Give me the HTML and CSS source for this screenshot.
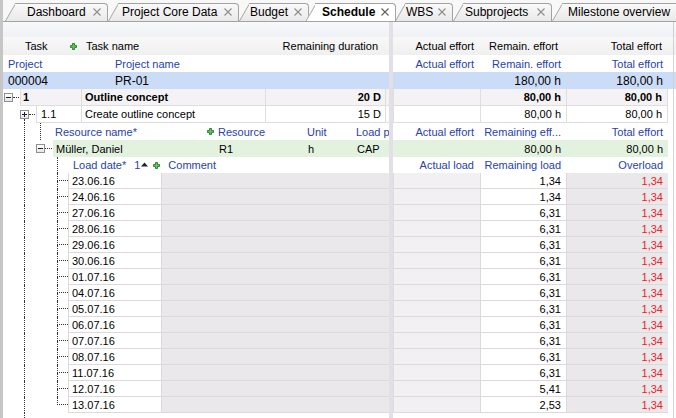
FILE: index.html
```html
<html>
<head>
    <title>Schedule</title>
    <link rel="stylesheet" href="styles.css">
</head>
<body>
<div class="app">
    <div class="tabs">
        <div class="tab t1"><span>Dashboard</span><svg class="x" width="8" height="8" viewBox="0 0 8 8"><path d="M0.5 0.5L7.5 7.5M7.5 0.5L0.5 7.5"/></svg></div>
        <div class="tab t2"><span>Project Core Data</span><svg class="x" width="8" height="8" viewBox="0 0 8 8"><path d="M0.5 0.5L7.5 7.5M7.5 0.5L0.5 7.5"/></svg></div>
        <div class="tab t3"><span>Budget</span><svg class="x" width="8" height="8" viewBox="0 0 8 8"><path d="M0.5 0.5L7.5 7.5M7.5 0.5L0.5 7.5"/></svg></div>
        <div class="tab t4 on"><span>Schedule</span><svg class="x" width="8" height="8" viewBox="0 0 8 8"><path d="M0.5 0.5L7.5 7.5M7.5 0.5L0.5 7.5"/></svg></div>
        <div class="tab t5"><span>WBS</span><svg class="x" width="8" height="8" viewBox="0 0 8 8"><path d="M0.5 0.5L7.5 7.5M7.5 0.5L0.5 7.5"/></svg></div>
        <div class="tab t6"><span>Subprojects</span><svg class="x" width="8" height="8" viewBox="0 0 8 8"><path d="M0.5 0.5L7.5 7.5M7.5 0.5L0.5 7.5"/></svg></div>
        <div class="tab t7"><span>Milestone overview</span></div>
    </div>

    <div class="grid">
        <!-- empty band above the headers -->
        <div class="row strip">
            <div class="lp"></div><div class="split"></div><div class="rp"></div><div class="tail"></div>
        </div>

        <!-- column headers -->
        <div class="row head">
            <div class="lp">
                <div class="c c-task">Task<svg class="plus" width="7" height="7" viewBox="0 0 7 7"><path d="M2.5 0.5h2v2h2v2h-2v2h-2v-2h-2v-2h2z"/></svg></div>
                <div class="c c-name">Task name</div>
                <div class="c c-dur num">Remaining duration</div>
            </div>
            <div class="split"></div>
            <div class="rp">
                <div class="c r1 num">Actual effort</div>
                <div class="c r2 num pr8">Remain. effort</div>
                <div class="c r3 num">Total effort</div>
            </div>
            <div class="tail"></div>
        </div>

        <!-- project -->
        <div class="row">
            <div class="lp hd">
                <div class="c c-proj">Project</div>
                <div class="c c-pname">Project name</div>
            </div>
            <div class="split"></div>
            <div class="rp hd">
                <div class="c r1 num">Actual effort</div>
                <div class="c r2 num">Remain. effort</div>
                <div class="c r3 num">Total effort</div>
            </div>
            <div class="tail"></div>
        </div>
        <div class="row proj">
            <div class="lp">
                <div class="c c-proj">000004</div>
                <div class="c c-pname pl3">PR-01</div>
            </div>
            <div class="split"></div>
            <div class="rp">
                <div class="c r1 num"></div>
                <div class="c r2 num">180,00 h</div>
                <div class="c r3 num">180,00 h</div>
            </div>
            <div class="tail"></div>
        </div>

        <!-- tasks -->
        <div class="row task sum">
            <div class="lp">
                <div class="tree"><span class="box minus"></span><span class="hl"></span></div>
                <div class="c cell c-id">1</div>
                <div class="c cell c-name">Outline concept</div>
                <div class="c cell c-dur num">20 D</div>
                <div class="c cell c-end"></div>
            </div>
            <div class="split"></div>
            <div class="rp">
                <div class="c cell r1 num"></div>
                <div class="c cell r2 num">80,00 h</div>
                <div class="c cell r3 num">80,00 h</div>
            </div>
            <div class="tail"></div>
        </div>
        <div class="row task">
            <div class="lp">
                <div class="tree"></div>
                <div class="tw"><span class="box plusbox down"></span><span class="hl"></span></div>
                <div class="c cell c-id2">1.1</div>
                <div class="c cell c-name">Create outline concept</div>
                <div class="c cell c-dur num">15 D</div>
                <div class="c cell c-end"></div>
            </div>
            <div class="split"></div>
            <div class="rp">
                <div class="c cell r1 num"></div>
                <div class="c cell r2 num">80,00 h</div>
                <div class="c cell r3 num">80,00 h</div>
            </div>
            <div class="tail"></div>
        </div>

        <!-- resources -->
        <div class="row">
            <div class="lp hd">
                <span class="g21"></span><span class="vl w16"></span><span class="vl w12"></span>
                <div class="c c-rn pl6">Resource name*<svg class="plus" width="7" height="7" viewBox="0 0 7 7"><path d="M2.5 0.5h2v2h2v2h-2v2h-2v-2h-2v-2h2z"/></svg></div>
                <div class="c c-res pl5">Resource</div>
                <div class="c c-unit pl6">Unit</div>
                <div class="c c-load pl7">Load planning</div>
            </div>
            <div class="split"></div>
            <div class="rp hd">
                <div class="c r1 num">Actual effort</div>
                <div class="c r2 num">Remaining eff...</div>
                <div class="c r3 num">Total effort</div>
            </div>
            <div class="tail"></div>
        </div>
        <div class="row res">
            <div class="lp">
                <span class="g21"></span><span class="vl w12"></span>
                <span class="mid"><span class="box minus"></span></span><span class="hl w7"></span>
                <div class="c c-rn green">Müller, Daniel</div>
                <div class="c c-res green">R1</div>
                <div class="c c-unit green">h</div>
                <div class="c c-load green">CAP</div>
            </div>
            <div class="split"></div>
            <div class="rp green">
                <div class="c r1 num"></div>
                <div class="c r2 num">80,00 h</div>
                <div class="c r3 num">80,00 h</div>
            </div>
            <div class="tail"></div>
        </div>

        <!-- load dates -->
        <div class="row h16">
            <div class="lp hd">
                <span class="g21"></span><span class="vl w33"></span><span class="vl w13"></span>
                <div class="c c-ld">Load date*<span class="sort">1</span><svg class="tri" width="7" height="5" viewBox="0 0 7 5"><path d="M0 4.5L3.5 0.5L7 4.5Z"/></svg><svg class="plus" width="7" height="7" viewBox="0 0 7 7"><path d="M2.5 0.5h2v2h2v2h-2v2h-2v-2h-2v-2h2z"/></svg><span class="cmt">Comment</span></div>
            </div>
            <div class="split"></div>
            <div class="rp hd">
                <div class="c r1 num">Actual load</div>
                <div class="c r2 num">Remaining load</div>
                <div class="c r3 num">Overload</div>
            </div>
            <div class="tail"></div>
        </div>

        <div class="row day"><div class="lp"><span class="g21"></span><span class="vl w33"></span><span class="hook"><i></i><i></i></span><div class="c date">23.06.16</div><div class="c rest"></div></div><div class="split"></div><div class="rp"><div class="c r1"></div><div class="c r2 num">1,34</div><div class="c r3 num over">1,34</div></div><div class="tail"></div></div>
        <div class="row day"><div class="lp"><span class="g21"></span><span class="vl w33"></span><span class="hook"><i></i><i></i></span><div class="c date">24.06.16</div><div class="c rest"></div></div><div class="split"></div><div class="rp"><div class="c r1"></div><div class="c r2 num">1,34</div><div class="c r3 num over">1,34</div></div><div class="tail"></div></div>
        <div class="row day"><div class="lp"><span class="g21"></span><span class="vl w33"></span><span class="hook"><i></i><i></i></span><div class="c date">27.06.16</div><div class="c rest"></div></div><div class="split"></div><div class="rp"><div class="c r1"></div><div class="c r2 num">6,31</div><div class="c r3 num over">1,34</div></div><div class="tail"></div></div>
        <div class="row day"><div class="lp"><span class="g21"></span><span class="vl w33"></span><span class="hook"><i></i><i></i></span><div class="c date">28.06.16</div><div class="c rest"></div></div><div class="split"></div><div class="rp"><div class="c r1"></div><div class="c r2 num">6,31</div><div class="c r3 num over">1,34</div></div><div class="tail"></div></div>
        <div class="row day"><div class="lp"><span class="g21"></span><span class="vl w33"></span><span class="hook"><i></i><i></i></span><div class="c date">29.06.16</div><div class="c rest"></div></div><div class="split"></div><div class="rp"><div class="c r1"></div><div class="c r2 num">6,31</div><div class="c r3 num over">1,34</div></div><div class="tail"></div></div>
        <div class="row day"><div class="lp"><span class="g21"></span><span class="vl w33"></span><span class="hook"><i></i><i></i></span><div class="c date">30.06.16</div><div class="c rest"></div></div><div class="split"></div><div class="rp"><div class="c r1"></div><div class="c r2 num">6,31</div><div class="c r3 num over">1,34</div></div><div class="tail"></div></div>
        <div class="row day"><div class="lp"><span class="g21"></span><span class="vl w33"></span><span class="hook"><i></i><i></i></span><div class="c date">01.07.16</div><div class="c rest"></div></div><div class="split"></div><div class="rp"><div class="c r1"></div><div class="c r2 num">6,31</div><div class="c r3 num over">1,34</div></div><div class="tail"></div></div>
        <div class="row day"><div class="lp"><span class="g21"></span><span class="vl w33"></span><span class="hook"><i></i><i></i></span><div class="c date">04.07.16</div><div class="c rest"></div></div><div class="split"></div><div class="rp"><div class="c r1"></div><div class="c r2 num">6,31</div><div class="c r3 num over">1,34</div></div><div class="tail"></div></div>
        <div class="row day"><div class="lp"><span class="g21"></span><span class="vl w33"></span><span class="hook"><i></i><i></i></span><div class="c date">05.07.16</div><div class="c rest"></div></div><div class="split"></div><div class="rp"><div class="c r1"></div><div class="c r2 num">6,31</div><div class="c r3 num over">1,34</div></div><div class="tail"></div></div>
        <div class="row day"><div class="lp"><span class="g21"></span><span class="vl w33"></span><span class="hook"><i></i><i></i></span><div class="c date">06.07.16</div><div class="c rest"></div></div><div class="split"></div><div class="rp"><div class="c r1"></div><div class="c r2 num">6,31</div><div class="c r3 num over">1,34</div></div><div class="tail"></div></div>
        <div class="row day"><div class="lp"><span class="g21"></span><span class="vl w33"></span><span class="hook"><i></i><i></i></span><div class="c date">07.07.16</div><div class="c rest"></div></div><div class="split"></div><div class="rp"><div class="c r1"></div><div class="c r2 num">6,31</div><div class="c r3 num over">1,34</div></div><div class="tail"></div></div>
        <div class="row day"><div class="lp"><span class="g21"></span><span class="vl w33"></span><span class="hook"><i></i><i></i></span><div class="c date">08.07.16</div><div class="c rest"></div></div><div class="split"></div><div class="rp"><div class="c r1"></div><div class="c r2 num">6,31</div><div class="c r3 num over">1,34</div></div><div class="tail"></div></div>
        <div class="row day"><div class="lp"><span class="g21"></span><span class="vl w33"></span><span class="hook"><i></i><i></i></span><div class="c date">11.07.16</div><div class="c rest"></div></div><div class="split"></div><div class="rp"><div class="c r1"></div><div class="c r2 num">6,31</div><div class="c r3 num over">1,34</div></div><div class="tail"></div></div>
        <div class="row day"><div class="lp"><span class="g21"></span><span class="vl w33"></span><span class="hook"><i></i><i></i></span><div class="c date">12.07.16</div><div class="c rest"></div></div><div class="split"></div><div class="rp"><div class="c r1"></div><div class="c r2 num">5,41</div><div class="c r3 num over">1,34</div></div><div class="tail"></div></div>
        <div class="row day"><div class="lp"><span class="g21"></span><span class="vl w33"></span><span class="hook end"><i></i><i></i></span><div class="c date">13.07.16</div><div class="c rest"></div></div><div class="split"></div><div class="rp"><div class="c r1"></div><div class="c r2 num">2,53</div><div class="c r3 num over">1,34</div></div><div class="tail"></div></div>

        <div class="row fill">
            <div class="lp"><span class="g21"></span><span class="vl grow"></span></div>
            <div class="split"></div><div class="rp"></div><div class="tail"></div>
        </div>
    </div>
</div>
</body>
</html>
```

FILE: styles.css
```css
* { box-sizing: border-box; }
body {
    margin: 0;
    width: 676px;
    height: 418px;
    overflow: hidden;
    background: #fff;
    color: #000;
    font: 11px "Liberation Sans", Arial, sans-serif;
}
.app {
    height: 418px;
    display: flex;
    flex-direction: column;
    border-left: 3px solid #c6c6c6;
}

/* tab strip */
.tabs {
    flex: none;
    height: 22px;
    display: flex;
    align-items: flex-end;
    padding-left: 2px;
    background: #f8f8f8;
    border-bottom: 1px solid #a3a3a3;
    overflow: hidden;
}
.tab {
    --tab-bg: linear-gradient(#f9f9f9, #e9e9e9);
    position: relative;
    z-index: 0;
    flex: none;
    height: 18px;
    display: flex;
    align-items: center;
    padding-right: 7px;
    font-size: 12px;
    white-space: nowrap;
}
.tab::before {
    content: "";
    position: absolute;
    z-index: -1;
    left: 0; top: 0; bottom: 0;
    width: 16px;
    background: var(--tab-bg);
    border-left: 1px solid #a3a3a3;
    border-top: 1px solid #a3a3a3;
    transform: skewX(-30deg);
    transform-origin: 0 100%;
}
.tab::after {
    content: "";
    position: absolute;
    z-index: -1;
    left: 10px; top: 0; bottom: 0; right: 0;
    background: var(--tab-bg);
    border-top: 1px solid #a3a3a3;
    border-right: 1px solid #a3a3a3;
    border-top-right-radius: 4px;
}
.tab .x { margin-left: auto; stroke: #8e8e8e; stroke-width: 1.1; }
.tab.on {
    --tab-bg: #fff;
    z-index: 1;
    height: 19px;
    margin-bottom: -1px;
    padding-bottom: 1px;
    font-weight: bold;
}
.tab.on .x { stroke: #606060; }
.t1 { width: 103px; padding-left: 22px; }
.t2 { width: 131px; padding-left: 14px; }
.t3 { width: 70px; padding-left: 11px; }
.t4 { width: 91px; padding-left: 17px; margin-left: -4px; }
.t5 { width: 58px; padding-left: 11px; margin-left: -1px; }
.t6 { width: 99px; padding-left: 12px; }
.t7 { width: 140px; padding-left: 16px; }

/* grid */
.grid { flex: 1; display: flex; flex-direction: column; overflow: hidden; }
.row { flex: none; display: flex; height: 17px; }
.row.h16, .row.day { height: 16px; }
.row.fill { flex: 1; }
.lp { width: 386px; flex: none; display: flex; overflow: hidden; }
.split { width: 4px; flex: none; background: #e2dfe6; }
.rp { width: 275px; flex: none; display: flex; }
.tail { flex: 1; margin-right: 2px; border-right: 1px solid #d2d2d2; }

.c {
    flex: none;
    display: flex;
    align-items: center;
    white-space: nowrap;
    overflow: hidden;
}
.num { justify-content: flex-end; padding-right: 5px; }
.hd { color: #2842a6; }
.pl3 { padding-left: 3px; }
.pl5 { padding-left: 5px; }
.pl6 { padding-left: 6px; }
.pl7 { padding-left: 7px; }
.pr8 { padding-right: 8px; }

.r1 { width: 87px; padding-right: 6px; }
.r2 { width: 86px; }
.r3 { width: 102px; }

.strip { height: 15px; background: linear-gradient(#f8f9fb, #eff1f5); }
.head { height: 18px; background: linear-gradient(#f8f8f8, #efefef); }
.head .c-dur { padding-right: 7px; }
.head .r3 { padding-right: 6px; }

.plus { flex: none; fill: #63c263; stroke: #2f8a2f; stroke-width: 1; }
.c-task { width: 78px; padding-left: 22px; }
.c-task .plus { margin-left: auto; margin-right: 4px; }
.c-name { width: 184px; padding-left: 3px; }
.head .c-name { padding-left: 5px; }
.c-dur { width: 120px; padding-right: 4px; }
.c-end { width: 4px; }

.c-proj { width: 107px; padding-left: 5px; }
.c-pname { flex: 1; padding-left: 5px; }
.proj { background: #cbdcf7; font-size: 12px; }

/* tree */
.tree { width: 17px; flex: none; display: flex; align-items: center; }
.tree .box { margin-left: 1px; }
.tw { width: 16px; flex: none; display: flex; align-items: center; }
.hl { flex: 1; height: 0; border-top: 1px dotted #333; margin-right: 1px; }
.hl.w7 { flex: none; width: 7px; align-self: center; }
.mid { display: flex; align-items: center; }
.box {
    position: relative;
    flex: none;
    width: 9px;
    height: 9px;
    border: 1px solid #8f8f8f;
    background: linear-gradient(#fff, #e6e6e6);
}
.box::before {
    content: "";
    position: absolute;
    left: 1px; top: 3px;
    width: 5px; height: 1px;
    background: #1c1c3c;
}
.box.plusbox::after {
    content: "";
    position: absolute;
    left: 3px; top: 1px;
    width: 1px; height: 5px;
    background: #1c1c3c;
}
.box.down { overflow: visible; }
.tw .box.down { box-shadow: none; }
.tw { position: relative; }
.tw::after {
    content: "";
    position: absolute;
    left: 4px; top: 13px;
    height: 4px;
    border-left: 1px dotted #333;
}
.g21 { width: 21px; flex: none; }
.vl { flex: none; border-left: 1px dotted #333; }
.vl.grow { flex: 1; }
.w12 { width: 12px; }
.w13 { width: 13px; }
.w16 { width: 16px; }
.w33 { width: 33px; }

.task .cell {
    border-left: 1px solid #dedede;
    border-bottom: 1px solid #dedede;
}
.sum { font-weight: bold; }
.sum .cell { background: #f4f2f4; }
.task .r3 { border-right: 1px solid #dedede; }
.c-id { width: 61px; padding-left: 2px; }
.c-id2 { width: 45px; padding-left: 4px; }

.c-rn { width: 163px; padding-left: 3px; }
.c-rn .plus { margin-left: auto; margin-right: 1px; }
.c-res { width: 89px; padding-left: 3px; }
.c-unit { width: 49px; padding-left: 3px; }
.c-load { width: 36px; padding-left: 3px; }
.green { background: #e3f2df; }

.c-ld { flex: 1; padding-left: 3px; }
.sort { margin-left: 8px; }
.tri { margin-left: 1px; margin-top: -2px; fill: #222; }
.c-ld .plus { margin-left: 5px; }
.cmt { margin-left: 8px; }

/* load dates */
.hook { width: 11px; flex: none; display: flex; flex-direction: column; }
.hook i { flex: 1; border-left: 1px dotted #333; }
.hook i:first-child { flex: none; height: 8px; border-bottom: 1px dotted #333; }
.hook.end i:last-child { border-left: 0; }
.day .date {
    width: 93px;
    padding-left: 3px;
    border-left: 1px solid #dcd8dc;
    border-bottom: 1px solid #dcd8dc;
}
.day .rest {
    flex: 1;
    background: #ebe8eb;
    border-left: 1px solid #dcd8dc;
    border-bottom: 1px solid #dcd8dc;
}
.day .rp .c { border-left: 1px solid #dcd8dc; border-bottom: 1px solid #dcd8dc; }
.day .r1 { background: #f3f0f3; }
.day .r3 { background: #ebe8eb; }
.over { color: #ee2222; }
```
